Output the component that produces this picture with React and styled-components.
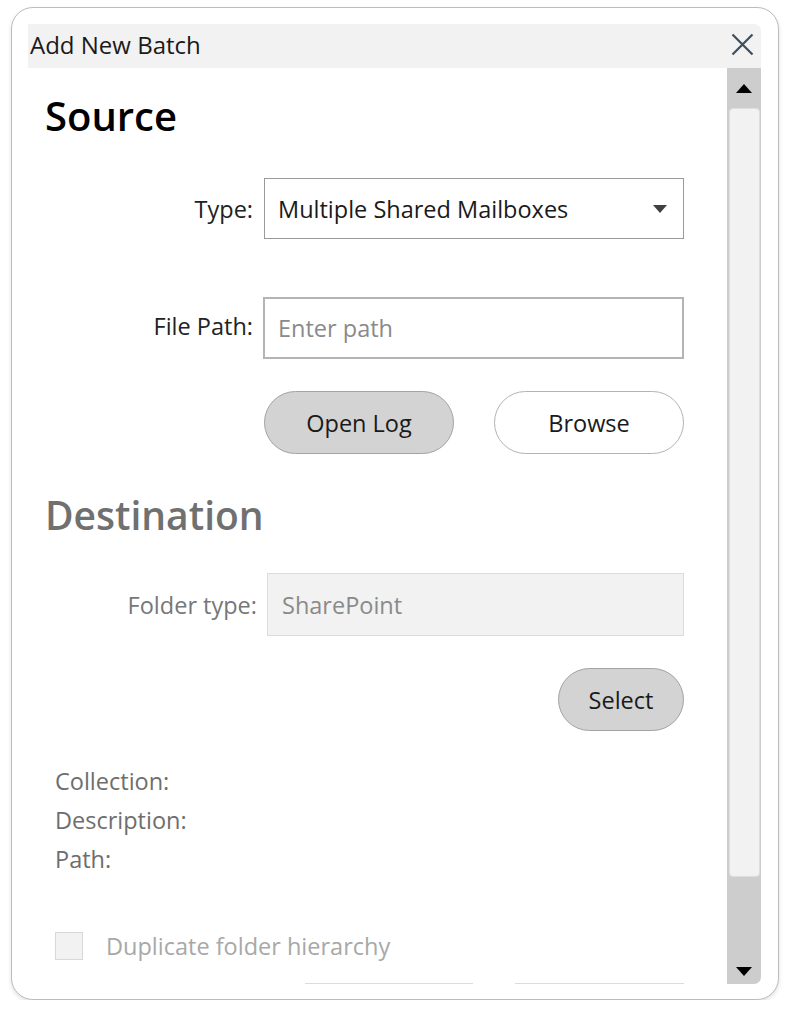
import React from 'react';
import styled, { createGlobalStyle } from 'styled-components';

const GlobalStyle = createGlobalStyle`
  body {
    margin: 0;
    background: #fff;
    font-family: "Open Sans", "Noto Sans", sans-serif;
  }
`;

const Card = styled.div`
  margin: 7px 0 0 11px;
  width: 768px;
  height: 993px;
  box-sizing: border-box;
  border: 1.5px solid #bcbcbc;
  border-radius: 22px;
  box-shadow: 0 2px 4px rgba(0,0,0,0.12);
  padding: 16px 17px 15px 16px;
  display: flex;
  flex-flow: column;
  background: #fff;
`;

const TitleBar = styled.div`
  height: 44px;
  background: #f2f2f2;
  border-top-right-radius: 7px;
  display: flex;
  align-items: center;
  justify-content: space-between;
  padding: 0 6px 4px 2px;
  box-sizing: border-box;
`;

const Title = styled.span`
  font-size: 24px;
  color: #1a1a1a;
`;

const CloseButton = styled.button`
  border: none;
  background: transparent;
  padding: 0;
  width: 26px;
  height: 26px;
  display: flex;
  align-items: center;
  justify-content: center;
  cursor: pointer;
`;

const Body = styled.div`
  flex: 1;
  display: flex;
  min-height: 0;
`;

const Content = styled.div`
  flex: 1;
  overflow: hidden;
  padding-right: 43px;
`;

const Heading = styled.h2`
  margin: ${p => p.$top}px 0 0 17px;
  font-size: ${p => p.$size}px;
  line-height: 48px;
  font-weight: 600;
  color: ${p => p.$muted ? '#707070' : '#000'};
`;

const FormRow = styled.div`
  display: grid;
  grid-template-columns: 1fr ${p => p.$field}px;
  column-gap: ${p => p.$gap}px;
  align-items: center;
  margin-top: ${p => p.$top}px;
`;

const Label = styled.label`
  text-align: right;
  font-size: 23.5px;
  color: ${p => p.$muted ? '#777' : '#222'};
  padding-bottom: ${p => p.$drop}px;
`;

const SelectBox = styled.div`
  height: 61px;
  box-sizing: border-box;
  border: 1.5px solid #9a9a9a;
  display: flex;
  align-items: center;
  justify-content: space-between;
  padding: 0 16px 0 13px;
  font-size: 23.5px;
  color: #1a1a1a;
`;

const TextInput = styled.input`
  height: 62px;
  box-sizing: border-box;
  border: 2px solid #b4b4b4;
  padding: 0 13px;
  font-family: inherit;
  font-size: 23.5px;
  color: #222;
  outline-style: none;
  &::placeholder {
    color: #8a8a8a;
  }
`;

const ReadOnlyBox = styled.div`
  height: 63px;
  box-sizing: border-box;
  border: 1.5px solid #dcdcdc;
  background: #f2f2f2;
  display: flex;
  align-items: center;
  padding: 0 14px;
  font-size: 23.5px;
  color: #8a8a8a;
`;

const ButtonRow = styled.div`
  display: flex;
  justify-content: flex-end;
  gap: 40px;
  margin-top: ${p => p.$top}px;
`;

const PillButton = styled.button`
  width: ${p => p.$width}px;
  height: 63px;
  border-radius: 32px;
  border: 1.5px solid ${p => p.$filled ? '#a3a3a3' : '#b3b3b3'};
  background: ${p => p.$filled ? '#d3d3d3' : '#fff'};
  font-family: inherit;
  font-size: 23.5px;
  color: #1a1a1a;
  cursor: pointer;
`;

const InfoList = styled.div`
  margin: 31px 0 0 27px;
  display: flex;
  flex-flow: column;
`;

const InfoLine = styled.div`
  font-size: 23.5px;
  line-height: 39px;
  color: #6e6e6e;
`;

const CheckRow = styled.label`
  display: flex;
  align-items: center;
  gap: 23px;
  margin: 51px 0 0 27px;
  font-size: 23.5px;
  color: #a8a8a8;
`;

const CheckBox = styled.span`
  width: 28px;
  height: 28px;
  box-sizing: border-box;
  border: 1.5px solid #d8d8d8;
  background: #f2f2f2;
`;

const FooterButtons = styled.div`
  display: flex;
  justify-content: flex-end;
  gap: 42px;
  margin-top: 21px;
`;

const GhostButton = styled.div`
  width: ${p => p.$width}px;
  height: 60px;
  border-top: 2px solid #dcdcdc;
`;

const Scrollbar = styled.div`
  width: 34px;
  display: flex;
  flex-flow: column;
  background: #cdcdcd;
  border-bottom-right-radius: 7px;
`;

const ArrowButton = styled.div`
  height: 40px;
  display: flex;
  justify-content: center;
  align-items: center;
`;

const Thumb = styled.div`
  height: 769px;
  margin: 0 1px 0 2px;
  background: #f2f2f2;
  border: 1px solid #dedede;
  border-radius: 4px;
  box-sizing: border-box;
`;

const Track = styled.div`
  flex: 1;
  display: flex;
  justify-content: center;
  align-items: flex-end;
  padding-bottom: 8px;
`;

const Triangle = ({ down }) => (
  <svg width="16" height="9" viewBox="0 0 16 9">
    <path d={down ? 'M0 0 L16 0 L8 9 Z' : 'M0 9 L16 9 L8 0 Z'} fill="#000" />
  </svg>
);

const App = () => (
  <>
    <GlobalStyle />
    <Card>
      <TitleBar>
        <Title>Add New Batch</Title>
        <CloseButton>
          <svg width="23" height="23" viewBox="0 0 23 23">
            <path d="M1.5 1.5 L21.5 21.5 M21.5 1.5 L1.5 21.5" stroke="#3d4f5c" strokeWidth="2.2" />
          </svg>
        </CloseButton>
      </TitleBar>
      <Body>
        <Content>
          <Heading $top={24} $size={40}>Source</Heading>
          <FormRow $field={420} $gap={11} $top={38}>
            <Label $drop={0}>Type:</Label>
            <SelectBox>
              <span>Multiple Shared Mailboxes</span>
              <svg width="14" height="8" viewBox="0 0 14 8">
                <path d="M0 0 L14 0 L7 8 Z" fill="#404040" />
              </svg>
            </SelectBox>
          </FormRow>
          <FormRow $field={421} $gap={10} $top={58}>
            <Label $drop={4}>File Path:</Label>
            <TextInput placeholder="Enter path" />
          </FormRow>
          <ButtonRow $top={32}>
            <PillButton $width={190} $filled>Open Log</PillButton>
            <PillButton $width={190}>Browse</PillButton>
          </ButtonRow>
          <Heading $top={37} $size={39} $muted>Destination</Heading>
          <FormRow $field={417} $gap={10} $top={34}>
            <Label $drop={0} $muted>Folder type:</Label>
            <ReadOnlyBox>SharePoint</ReadOnlyBox>
          </FormRow>
          <ButtonRow $top={32}>
            <PillButton $width={126} $filled>Select</PillButton>
          </ButtonRow>
          <InfoList>
            <InfoLine>Collection:</InfoLine>
            <InfoLine>Description:</InfoLine>
            <InfoLine>Path:</InfoLine>
          </InfoList>
          <CheckRow>
            <CheckBox />
            Duplicate folder hierarchy
          </CheckRow>
          <FooterButtons>
            <GhostButton $width={168} />
            <GhostButton $width={169} />
          </FooterButtons>
        </Content>
        <Scrollbar>
          <ArrowButton><Triangle /></ArrowButton>
          <Thumb />
          <Track><Triangle down /></Track>
        </Scrollbar>
      </Body>
    </Card>
  </>
);

export default App;
